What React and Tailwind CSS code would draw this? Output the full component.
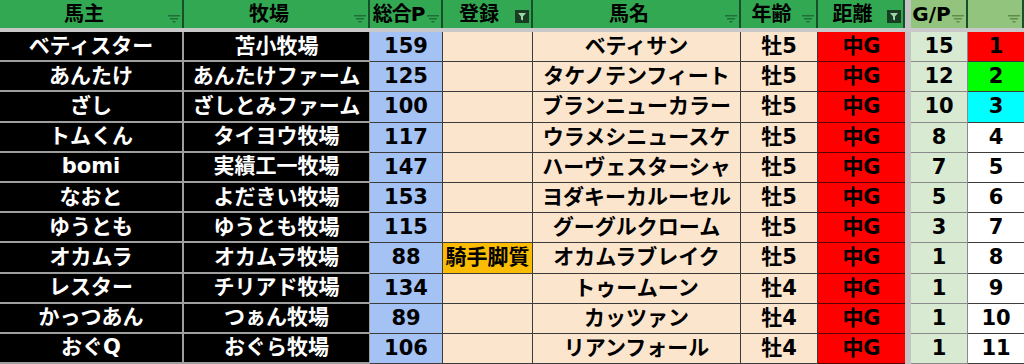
import React from 'react';

const rows = [
  ['ベティスター', '苫小牧場', '159', '', 'ベティサン', '牡5', '中G', '15', '1'],
  ['あんたけ', 'あんたけファーム', '125', '', 'タケノテンフィート', '牡5', '中G', '12', '2'],
  ['ざし', 'ざしとみファーム', '100', '', 'ブランニューカラー', '牡5', '中G', '10', '3'],
  ['トムくん', 'タイヨウ牧場', '117', '', 'ウラメシニュースケ', '牡5', '中G', '8', '4'],
  ['bomi', '実績工一牧場', '147', '', 'ハーヴェスターシャ', '牡5', '中G', '7', '5'],
  ['なおと', 'よだきい牧場', '153', '', 'ヨダキーカルーセル', '牡5', '中G', '5', '6'],
  ['ゆうとも', 'ゆうとも牧場', '115', '', 'グーグルクローム', '牡5', '中G', '3', '7'],
  ['オカムラ', 'オカムラ牧場', '88', '騎手脚質', 'オカムラブレイク', '牡5', '中G', '1', '8'],
  ['レスター', 'チリアド牧場', '134', '', 'トゥームーン', '牡4', '中G', '1', '9'],
  ['かっつあん', 'つぁん牧場', '89', '', 'カッツァン', '牡4', '中G', '1', '10'],
  ['おぐQ', 'おぐら牧場', '106', '', 'リアンフォール', '牡4', '中G', '1', '11'],
];

const rankBg = {
  '1': 'bg-[#ff0000]',
  '2': 'bg-[#00ff00]',
  '3': 'bg-[#00ffff]',
};

const gridCols = 'grid grid-cols-[184px_186px_73px_90px_208px_77px_87px_6px_57px_56px]';

// little "≡" filter mark excel shows on every header
const FilterMark = ({ color = '#1f6e38' }) => (
  <svg width="12" height="9" viewBox="0 0 12 9" className="self-end mb-[4px] mr-[2px] shrink-0">
    <rect x="0" y="0" width="12" height="1.5" fill={color} />
    <rect x="2" y="3" width="8" height="1.5" fill={color} />
    <rect x="4.5" y="6" width="3" height="1.5" fill={color} />
  </svg>
);

// filter that's actually switched on
const ActiveFilter = () => (
  <svg width="14" height="13" viewBox="0 0 14 13" className="self-center mt-[5px] mr-[2px] shrink-0">
    <rect x="0" y="0" width="14" height="13" fill="#183d22" />
    <path d="M3 3 H11 L8 6.5 V10.5 L6 9.5 V6.5 Z" fill="#9fd3a8" />
  </svg>
);

const HeaderCell = ({ label, active, light, className = '' }) => (
  <div
    className={`flex h-full border-r-2 border-[#174f28] ${light ? 'bg-[#93c47d]' : 'bg-[#33a852]'} ${className}`}
  >
    <span className="flex-1 text-center text-[20px] leading-[27px] pt-[1px] font-bold text-black">{label}</span>
    {active ? <ActiveFilter /> : <FilterMark color={light ? '#5e8a4c' : '#1f6e38'} />}
  </div>
);

const Cell = ({ children, className = '' }) => (
  <div className={`flex items-center justify-center font-bold text-[21px] leading-none ${className}`}>
    {children}
  </div>
);

const App = () => {
  return (
    <div
      className="w-[1024px] h-[364px] overflow-hidden bg-white"
      style={{ fontFamily: '"DejaVu Sans", "Noto Sans CJK JP", sans-serif' }}
    >
      {/* header row */}
      <div className={`${gridCols} h-[27px]`}>
        <HeaderCell label="馬主" />
        <HeaderCell label="牧場" />
        <HeaderCell label="総合P" className="tracking-[-1px]" />
        <HeaderCell label="登録" active />
        <HeaderCell label="馬名" />
        <HeaderCell label="年齢" />
        <HeaderCell label="距離" active className="border-r-0" />
        <div className="bg-[#c4c4c4]" />
        <HeaderCell label="G/P" light />
        <HeaderCell label="" light className="border-r-0" />
      </div>
      <div className="h-[5px] bg-[#c8c8c8] border-t border-[#d9ead3]" />

      {rows.map((r, i) => (
        <div key={i} className={`${gridCols} h-[30.2px]`}>
          <Cell className="bg-black text-white border-b-2 border-r-2 border-[#9e9e9e]">{r[0]}</Cell>
          <Cell className="bg-black text-white border-b-2 border-r border-[#9e9e9e]">{r[1]}</Cell>
          <Cell className="bg-[#a4c2f4] text-black border-b border-r border-[#3c3c3c]">{r[2]}</Cell>
          <Cell
            className={`text-black border-b border-r border-[#3c3c3c] ${r[3] ? 'bg-[#fbbc04] text-[20px]' : 'bg-[#fce5cd]'}`}
          >
            {r[3]}
          </Cell>
          <Cell className="bg-[#fce5cd] text-black border-b border-r border-[#3c3c3c]">{r[4]}</Cell>
          <Cell className="bg-[#fce5cd] text-black border-b border-r border-[#3c3c3c]">{r[5]}</Cell>
          <Cell className="bg-[#ff0000] text-black border-b border-[#5a0000]">{r[6]}</Cell>
          <div className="bg-[#c4c4c4]" />
          <Cell className="bg-[#d9ead3] text-black border-b border-r border-[#8a8a8a]">{r[7]}</Cell>
          <Cell className={`${rankBg[r[8]] || 'bg-white'} text-black border-b border-[#3c3c3c]`}>{r[8]}</Cell>
        </div>
      ))}
    </div>
  );
};

export default App;
